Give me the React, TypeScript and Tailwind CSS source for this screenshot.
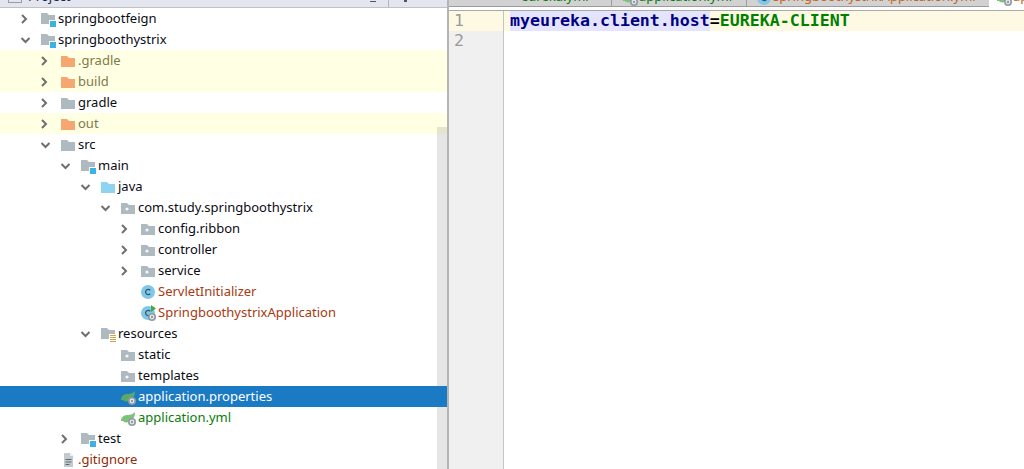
const FolderShape = ({ color }: { color: string }) => (
  <path d="M0 3h6l2 2h6v9H0z" fill={color} />
);

const SourceRoot = () => (
  <svg width="16" height="16" viewBox="0 0 16 16">
    <path d="M0 2h6l2 2h6v9H0z" fill="#aeb9c0" />
    <rect x="8" y="9" width="7" height="7" fill="#fff" />
    <rect x="9" y="10" width="6" height="6" fill="#3eb1e4" />
  </svg>
);

const ResourceRoot = () => (
  <svg width="16" height="16" viewBox="0 0 16 16">
    <path d="M0 2h6l2 2h6v9H0z" fill="#aeb9c0" />
    <rect x="8" y="8" width="8" height="8" fill="#fff" />
    <path d="M9 9.5h6M9 11.5h6M9 13.5h6M9 15.5h6" stroke="#d9a343" strokeWidth="1" />
  </svg>
);

const Folder = ({ color }: { color: string }) => (
  <svg width="16" height="16" viewBox="0 0 16 16">
    <FolderShape color={color} />
  </svg>
);

const PackageIcon = () => (
  <svg width="16" height="16" viewBox="0 0 16 16">
    <FolderShape color="#aeb9c0" />
    <circle cx="6" cy="9" r="1.6" fill="#f4f6f7" />
  </svg>
);

const GearBadge = () => (
  <g>
    <circle cx="11" cy="12" r="4" fill="#8f9ba3" />
    <circle cx="11" cy="12" r="2.4" fill="#e6eaec" />
    <circle cx="11" cy="12" r="1.2" fill="#8f9ba3" />
  </g>
);

const ClassIcon = ({ run }: { run?: boolean }) => (
  <svg width="16" height="16" viewBox="0 0 16 16">
    <circle cx="7" cy="8" r="7" fill="#80c8e8" />
    <path d="M9.2 6.3a2.6 2.6 0 1 0 0 3.4" fill="none" stroke="#35566b" strokeWidth="1.3" />
    {run && <path d="M10 0l5 3.5L10 7z" fill="#45a845" />}
    {run && <GearBadge />}
  </svg>
);

const SpringIcon = ({ dark }: { dark?: boolean }) => (
  <svg width="16" height="16" viewBox="0 0 16 16">
    <path d="M0 11C0 6 4 5 7 5c3 0 5-1 7-3 0 4-1 6-3 7-1 3-5 4-8 3l-1-1z" fill={dark ? "#5ba86a" : "#7dc27a"} />
    <GearBadge />
  </svg>
);

const FileIcon = () => (
  <svg width="16" height="16" viewBox="0 0 16 16">
    <path d="M3 1h6l3 3v11H3z" fill="#c3cacf" />
    <path d="M9 1v3h3z" fill="#eef0f2" />
    <path d="M4.5 7.5h6M4.5 10h6M4.5 12.5h4" stroke="#5f6a72" strokeWidth="1" />
  </svg>
);

const Chevron = ({ open }: { open: boolean }) => (
  <svg width="16" height="16" viewBox="0 0 16 16" fill="none" stroke="#6f6f6f" strokeWidth="2">
    {open ? <path d="M4.5 6l4 4 4-4" /> : <path d="M5 4l4 4-4 4" />}
  </svg>
);

type Row = {
  depth: number;
  label: string;
  icon: React.ReactNode;
  open?: boolean;
  tone?: "ignored" | "class" | "yml" | "git";
  selected?: boolean;
};

const orange = "#f5a671";
const gray = "#aeb9c0";

const rows: Row[] = [
  { depth: 0, label: "springbootfeign", icon: <SourceRoot />, open: false },
  { depth: 0, label: "springboothystrix", icon: <SourceRoot />, open: true },
  { depth: 1, label: ".gradle", icon: <Folder color={orange} />, open: false, tone: "ignored" },
  { depth: 1, label: "build", icon: <Folder color={orange} />, open: false, tone: "ignored" },
  { depth: 1, label: "gradle", icon: <Folder color={gray} />, open: false },
  { depth: 1, label: "out", icon: <Folder color={orange} />, open: false, tone: "ignored" },
  { depth: 1, label: "src", icon: <Folder color={gray} />, open: true },
  { depth: 2, label: "main", icon: <SourceRoot />, open: true },
  { depth: 3, label: "java", icon: <Folder color="#8ed3ef" />, open: true },
  { depth: 4, label: "com.study.springboothystrix", icon: <PackageIcon />, open: true },
  { depth: 5, label: "config.ribbon", icon: <PackageIcon />, open: false },
  { depth: 5, label: "controller", icon: <PackageIcon />, open: false },
  { depth: 5, label: "service", icon: <PackageIcon />, open: false },
  { depth: 5, label: "ServletInitializer", icon: <ClassIcon />, tone: "class" },
  { depth: 5, label: "SpringboothystrixApplication", icon: <ClassIcon run />, tone: "class" },
  { depth: 3, label: "resources", icon: <ResourceRoot />, open: true },
  { depth: 4, label: "static", icon: <PackageIcon /> },
  { depth: 4, label: "templates", icon: <PackageIcon /> },
  { depth: 4, label: "application.properties", icon: <SpringIcon dark />, selected: true },
  { depth: 4, label: "application.yml", icon: <SpringIcon />, tone: "yml" },
  { depth: 2, label: "test", icon: <SourceRoot />, open: false },
  { depth: 1, label: ".gitignore", icon: <FileIcon />, tone: "git" },
];

const toneClass = (row: Row) => {
  if (row.selected) return "text-white";
  if (row.tone === "ignored") return "text-[#7f7a45]";
  if (row.tone === "class") return "text-[#a83a10]";
  if (row.tone === "yml") return "text-[#0a7d0a]";
  if (row.tone === "git") return "text-[#8f2a08]";
  return "text-[#0c0c14]";
};

const TreeRow = ({ row }: { row: Row }) => (
  <div
    className={`relative flex h-[21px] items-center ${
      row.selected ? "z-10 bg-[#1b7ac4]" : row.tone === "ignored" ? "bg-[#ffffe4]" : ""
    }`}
    style={{ paddingLeft: row.depth * 20 + 17 }}
  >
    <div className="w-4 h-4 mr-2 shrink-0">{row.open !== undefined && <Chevron open={row.open} />}</div>
    <div className="w-4 h-4 mr-px shrink-0">{row.icon}</div>
    <span className={`text-[13px] leading-[21px] whitespace-nowrap ${toneClass(row)}`}>{row.label}</span>
  </div>
);

const Tab = ({
  label,
  color,
  icon,
  className,
}: {
  label: string;
  color: string;
  icon?: React.ReactNode;
  className: string;
}) => (
  <div className={`flex shrink-0 h-[7px] overflow-hidden ${className}`}>
    {icon && <div className="w-4 h-4 -mt-[10px] shrink-0">{icon}</div>}
    <span className={`-mt-[14px] text-[13px] leading-[21px] whitespace-nowrap ${color}`}>{label}</span>
  </div>
);

export default function App() {
  return (
    <div className="flex w-[1024px] h-[469px] overflow-hidden bg-white font-['Noto_Sans',sans-serif]">
      {/* Project tree */}
      <div className="relative w-[447px] h-full shrink-0 overflow-hidden">
        <div className="flex h-2 items-start bg-[#e3e6ee] border-b border-[#bfc1c6] overflow-hidden">
          <div className="ml-2 w-[14px] h-[3px] border border-t-0 border-[#9a9ca3]" />
          <span className="ml-[6px] -mt-[14px] text-[13px] leading-[21px] text-[#1d2a4a]">Project</span>
          <div className="ml-[300px] mt-[1px] w-[6px] h-px bg-[#555]" />
          <div className="ml-[12px] w-px h-[7px] bg-[#b4b6bb]" />
          <div className="ml-[15px] w-[3px] h-[2px] bg-[#555]" />
        </div>
        {rows.map((row) => (
          <TreeRow key={row.label} row={row} />
        ))}
        {/* scrollbar thumb */}
        <div className="absolute right-0 top-[127px] bottom-0 w-[10px] bg-black/10" />
      </div>

      {/* Editor */}
      <div className="flex flex-col flex-1 min-w-0 border-l-2 border-[#b4b4b4]">
        <div className="flex h-[7px] items-start overflow-hidden">
          <Tab
            label="eureka.yml"
            color="text-[#0a7d0a]"
            className="w-[162px] pl-[72px] bg-[#d2d2d2] border-b border-[#9c9c9c]"
          />
          <Tab
            label="application.yml"
            color="text-[#0a7d0a]"
            icon={<SpringIcon />}
            className="w-[135px] pl-[11px] bg-[#d2d2d2] border-b border-l border-[#9c9c9c]"
          />
          <Tab
            label="springboothystrixApplication.yml"
            color="text-[#c0651a]"
            icon={<ClassIcon />}
            className="w-[243px] pl-[10px] bg-[#d2d2d2] border-b border-l border-[#9c9c9c]"
          />
          <Tab
            label="application.properties"
            color="text-[#c0651a]"
            icon={<SpringIcon />}
            className="flex-1 w-[35px] pl-2 bg-white"
          />
        </div>
        <div className="h-[3px] bg-white" />
        <div className="flex flex-1 border-t border-[#a9a9a9] font-['DejaVu_Sans_Mono',monospace] text-[16.6px] leading-5">
          <div className="w-[55px] shrink-0 bg-[#f0f0f0] border-r border-[#c4c4c4] text-[#9a9a9a]">
            <div className="h-5 pl-[5px] bg-[#fef9e3]">1</div>
            <div className="h-5 pl-[5px]">2</div>
          </div>
          <div className="flex-1 min-w-0">
            <div className="flex h-5 pl-[6px] font-bold bg-[#fef9e3]">
              <span className="text-[#000080] bg-[#e4e4ff]">myeureka.client.host</span>
              <span className="text-black">=</span>
              <span className="text-[#008000]">EUREKA-CLIENT</span>
            </div>
          </div>
        </div>
      </div>
    </div>
  );
}
